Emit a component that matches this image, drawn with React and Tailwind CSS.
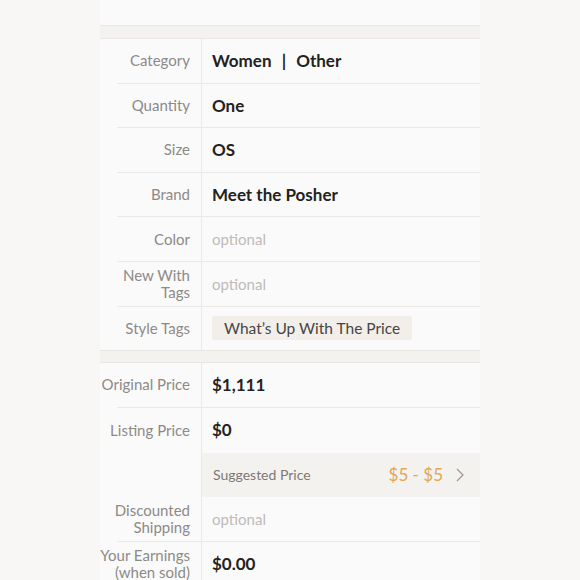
export default function App() {
  const font = { fontFamily: "Lato, 'Noto Sans', sans-serif" };

  const Line = () => <div className="ml-[17px] h-px bg-[#ebe9e6]" />;

  const Row = ({ label, children, last, h = "h-[43.6px]" }) => (
    <div className="flex flex-col">
      <div className={`flex ${h}`}>
        <div className="w-[102px] shrink-0 border-r border-[#ebe9e6] pr-[11px] flex items-center justify-end text-right whitespace-nowrap text-[15px] leading-[17px] text-[#8c8a88]">
          {label}
        </div>
        <div className="flex-1 pl-[10px] flex items-center">{children}</div>
      </div>
      {!last && <Line />}
    </div>
  );

  const Value = ({ children }) => (
    <span className="text-[17px] font-bold text-[#222]">{children}</span>
  );
  const Optional = () => <span className="text-[15px] text-[#bdbbb9]">optional</span>;

  return (
    <div
      className="w-[580px] h-[580px] overflow-hidden bg-[#f8f7f6] flex justify-center"
      style={font}
    >
      <div className="w-[380px] bg-[#fbfafa] flex flex-col">
        <div className="h-[26px] shrink-0 border-b border-[#e9e7e3]" />
        <div className="h-[13px] shrink-0 bg-[#f3f2ee] border-b border-[#e9e7e3]" />

        <Row label="Category">
          <Value>
            Women <span className="mx-[6px]">|</span> Other
          </Value>
        </Row>
        <Row label="Quantity">
          <Value>One</Value>
        </Row>
        <Row label="Size">
          <Value>OS</Value>
        </Row>
        <Row label="Brand">
          <Value>Meet the Posher</Value>
        </Row>
        <Row label="Color">
          <Optional />
        </Row>
        <Row label={<>New With<br />Tags</>}>
          <Optional />
        </Row>
        <Row label="Style Tags" last>
          <span className="bg-[#f2efeb] rounded-[2px] px-[12px] h-[24px] flex items-center text-[15.5px] text-[#474543]">
            What’s Up With The Price
          </span>
        </Row>

        <div className="h-[13px] shrink-0 bg-[#f3f2ee] border-y border-[#e9e7e3]" />

        <Row label="Original Price" h="h-[43.5px]">
          <Value>$1,111</Value>
        </Row>

        <div className="flex">
          <div className="w-[102px] shrink-0 border-r border-[#ebe9e6] pr-[11px] h-[89.5px]">
            <div className="h-[45px] flex items-center justify-end whitespace-nowrap text-[15px] text-[#8c8a88]">
              Listing Price
            </div>
          </div>
          <div className="flex-1 flex flex-col">
            <div className="h-[45px] pl-[10px] flex items-center">
              <Value>$0</Value>
            </div>
            <div className="h-[44.5px] bg-[#f3f2ee] pl-[11px] pr-[16px] flex items-center">
              <span className="text-[14px] text-[#7b7977]">Suggested Price</span>
              <span className="ml-auto text-[17px] text-[#e3a552]">$5 - $5</span>
              <svg width="8" height="14" viewBox="0 0 8 14" className="ml-[13px]">
                <path d="M1 1l6 6-6 6" fill="none" stroke="#9a9896" strokeWidth="1.2" />
              </svg>
            </div>
          </div>
        </div>
        <Line />

        <Row label={<>Discounted<br />Shipping</>}>
          <Optional />
        </Row>
        <Row label={<>Your Earnings<br />(when sold)</>} last>
          <Value>$0.00</Value>
        </Row>
      </div>
    </div>
  );
}
